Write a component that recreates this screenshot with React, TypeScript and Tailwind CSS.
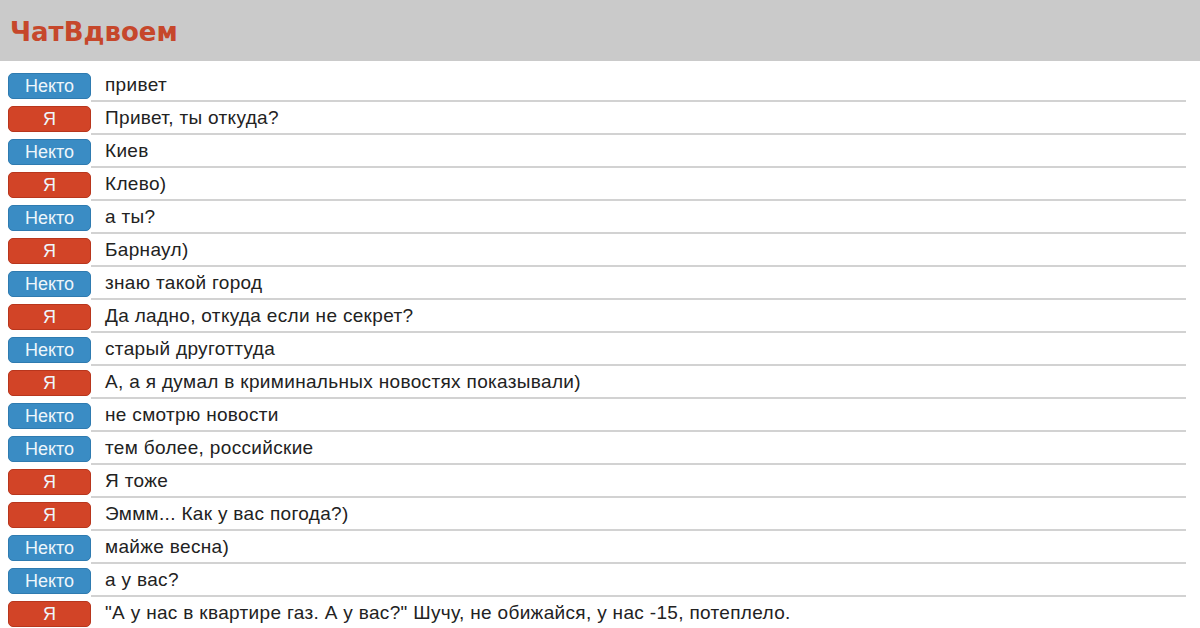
import React from 'react';

type Message = { who: 'them' | 'me'; text: string };

const messages: Message[] = [
  { who: 'them', text: 'привет' },
  { who: 'me', text: 'Привет, ты откуда?' },
  { who: 'them', text: 'Киев' },
  { who: 'me', text: 'Клево)' },
  { who: 'them', text: 'а ты?' },
  { who: 'me', text: 'Барнаул)' },
  { who: 'them', text: 'знаю такой город' },
  { who: 'me', text: 'Да ладно, откуда если не секрет?' },
  { who: 'them', text: 'старый друготтуда' },
  { who: 'me', text: 'А, а я думал в криминальных новостях показывали)' },
  { who: 'them', text: 'не смотрю новости' },
  { who: 'them', text: 'тем более, российские' },
  { who: 'me', text: 'Я тоже' },
  { who: 'me', text: 'Эммм... Как у вас погода?)' },
  { who: 'them', text: 'майже весна)' },
  { who: 'them', text: 'а у вас?' },
  { who: 'me', text: '"А у нас в квартире газ. А у вас?" Шучу, не обижайся, у нас -15, потеплело.' },
];

const Badge: React.FC<{ who: Message['who'] }> = ({ who }) => {
  const isMe = who === 'me';
  return (
    <div
      className={`w-[83px] h-[26px] shrink-0 rounded-[5px] border flex items-center justify-center pt-[1px] text-[18px] leading-none text-[#eef6fb] ${
        isMe ? 'bg-[#d24427] border-[#b8361d]' : 'bg-[#3a8cc4] border-[#2f7bb0]'
      }`}
    >
      {isMe ? 'Я' : 'Некто'}
    </div>
  );
};

export default function App() {
  return (
    <div className="w-[1200px] h-[628px] overflow-hidden bg-white font-['Liberation_Sans',Arial,sans-serif]">
      {/* Шапка */}
      <div className="h-[61px] bg-[#cacaca] flex items-center px-[10px]">
        <h1 className="font-['DejaVu_Sans',Verdana,sans-serif] text-[26px] font-bold text-[#c6472b] mt-[4px]">
          ЧатВдвоем
        </h1>
      </div>

      {/* Сообщения */}
      <div className="pt-[8px] pl-[8px] pr-[14px]">
        {messages.map((m, i) => (
          <div key={i} className="flex items-center h-[33px]">
            <Badge who={m.who} />
            <div className="flex-1 h-full flex items-center pl-[14px] pt-[2px] border-b-2 border-[#d2d2d2] text-[19px] tracking-[0.33px] text-[#222]">
              {m.text}
            </div>
          </div>
        ))}
      </div>
    </div>
  );
}
